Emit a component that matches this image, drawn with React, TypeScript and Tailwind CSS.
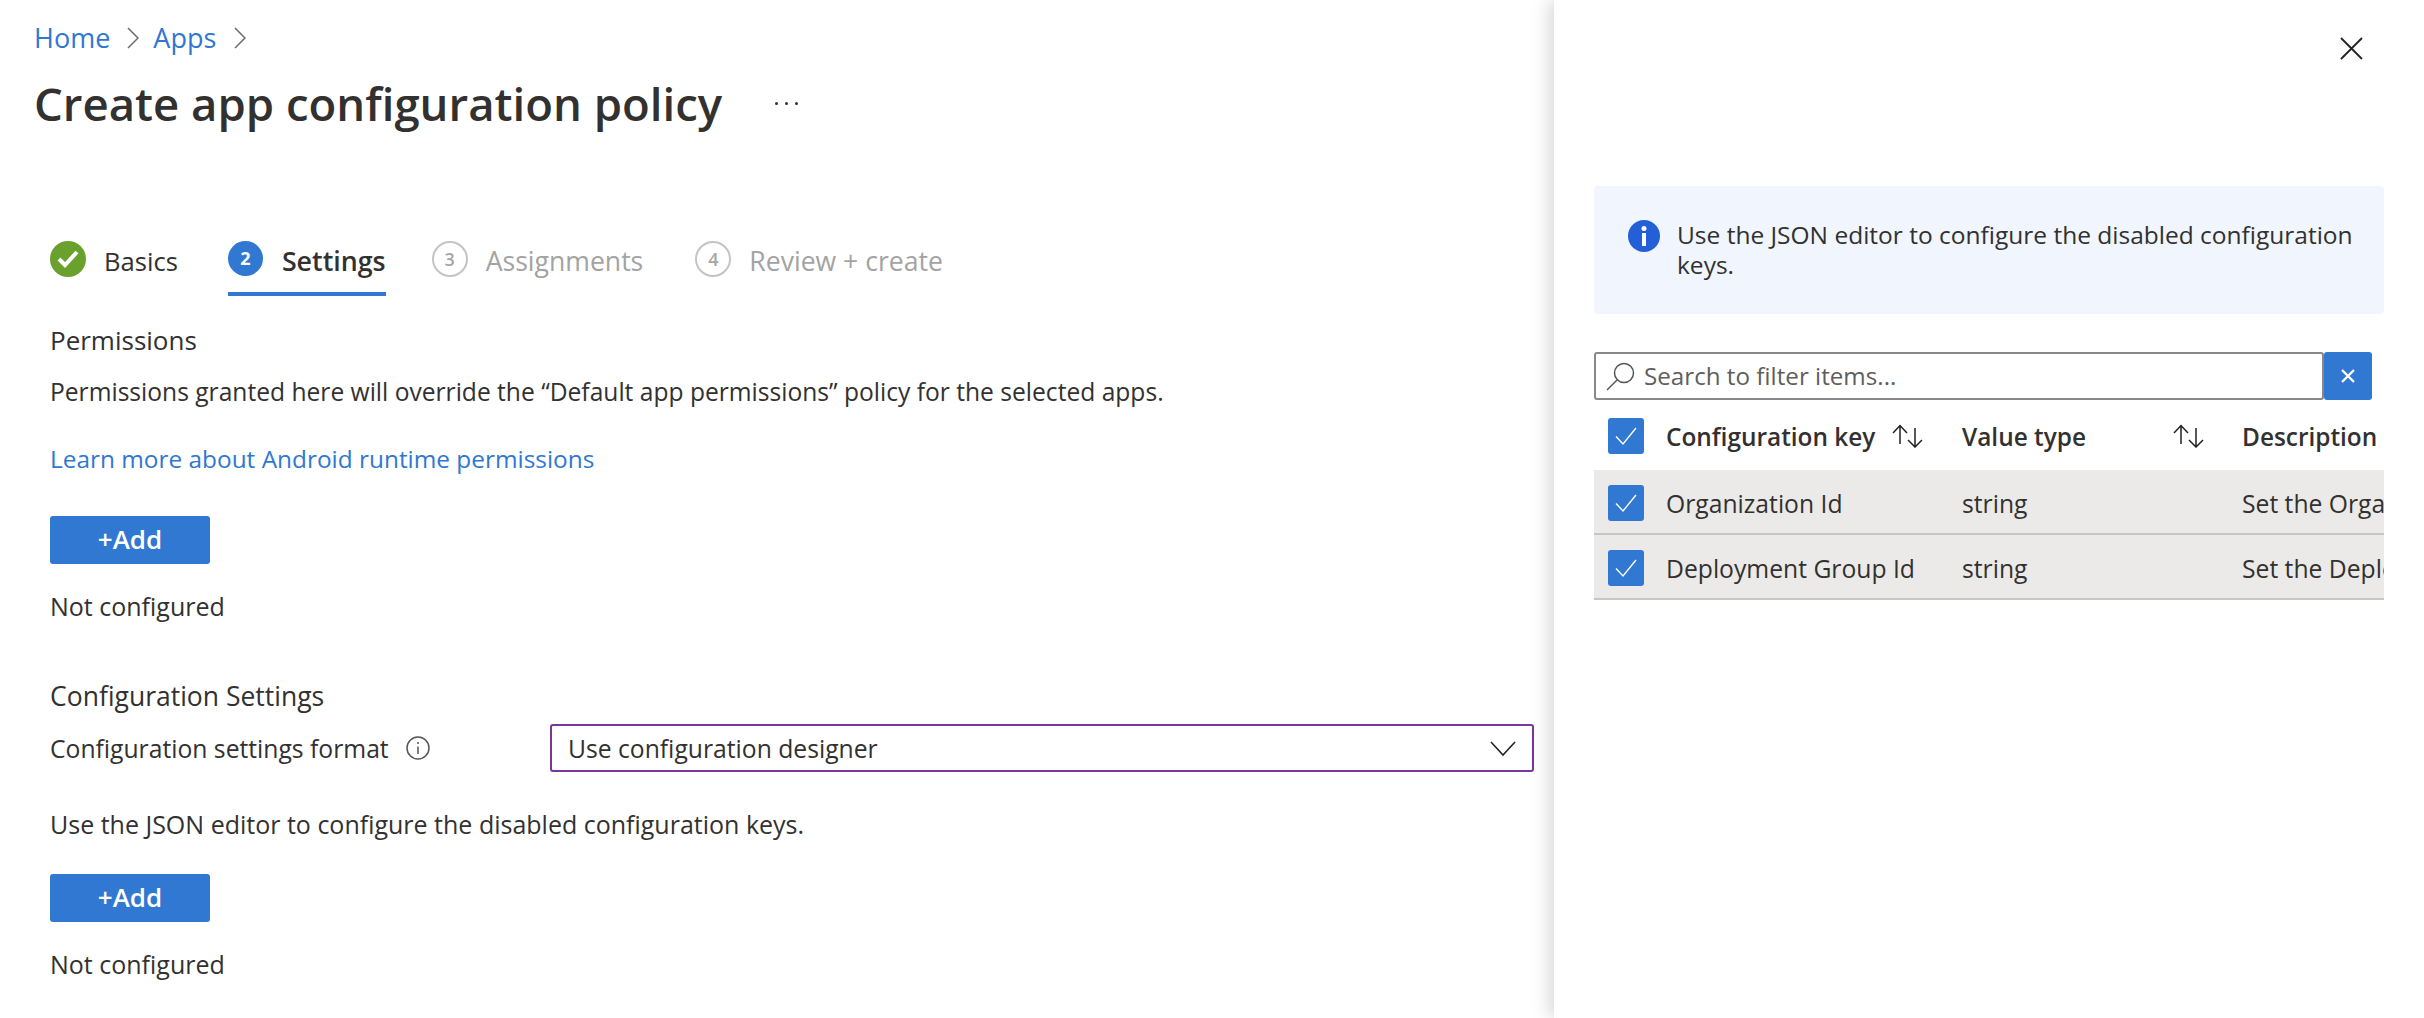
import React from 'react';

const FONT = "font-['Open_Sans','Noto_Sans',sans-serif]";

const CheckBox = () => (
  <div className="flex h-[36px] w-[36px] items-center justify-center rounded-[3px] bg-[#3078d1]">
    <svg width="24" height="22" viewBox="0 0 24 22" fill="none" stroke="#fff" strokeWidth="1.4">
      <path d="M2 11.5 L9 19 L22 3" />
    </svg>
  </div>
);

const SortIcon = () => (
  <svg width="32" height="24" viewBox="0 0 32 24" fill="none" stroke="#222" strokeWidth="1.5">
    <path d="M9 20 V2 M2 9 L9 1.5 L16 9" />
    <path d="M24 4 V23 M17 16 L24 23 L31 16" />
  </svg>
);

const AddButton = () => (
  <button className="flex h-[48px] w-[160px] items-center justify-center rounded-[3px] bg-[#3078d1] pb-[2px] text-[26px] font-semibold text-white">
    +Add
  </button>
);

const Step = ({ n, label, className }: { n: string; label: string; className: string }) => (
  <div className={`flex h-[55px] items-start gap-[18px] ${className}`}>
    <div className="flex h-[36px] w-[36px] items-center justify-center rounded-full border-2 border-[#c4c4c4] text-[18px] font-semibold text-[#a6a6a6]">
      {n}
    </div>
    <span className="text-[26.6px] leading-[40px] text-[#a3a3a3]">{label}</span>
  </div>
);

const rows = [
  { key: 'Organization Id', type: 'string', desc: 'Set the Organization Id' },
  { key: 'Deployment Group Id', type: 'string', desc: 'Set the Deployment Group Id' },
];

export default function App() {
  return (
    <div className={`flex h-[1018px] w-[2424px] overflow-hidden bg-white text-[25px] text-[#323130] ${FONT}`}>
      {/* LEFT: wizard */}
      <div className="flex w-[1554px] shrink-0 flex-col">
        <div className="ml-[34px] mt-[18px] flex h-[40px] items-center text-[27px] text-[#2f78d1]">
          <span>Home</span>
          <svg className="ml-[17px] mr-[14px]" width="12" height="22" viewBox="0 0 12 22" fill="none" stroke="#6b6b6b" strokeWidth="1.5">
            <path d="M1 1 L11 11 L1 21" />
          </svg>
          <span>Apps</span>
          <svg className="ml-[18px]" width="12" height="22" viewBox="0 0 12 22" fill="none" stroke="#6b6b6b" strokeWidth="1.5">
            <path d="M1 1 L11 11 L1 21" />
          </svg>
        </div>
        <div className="ml-[34px] mt-[15px] flex h-[60px] items-center">
          <h1 className="text-[45.5px] font-semibold text-[#323130]">Create app configuration policy</h1>
          <span className="ml-[53px] flex gap-[7px]">
            <i className="h-[3px] w-[3px] rounded-full bg-[#323130]" />
            <i className="h-[3px] w-[3px] rounded-full bg-[#323130]" />
            <i className="h-[3px] w-[3px] rounded-full bg-[#323130]" />
          </span>
        </div>

        <div className="ml-[50px] mt-[108px] flex">
          <div className="flex h-[55px] items-start gap-[18px]">
            <div className="flex h-[36px] w-[36px] items-center justify-center rounded-full bg-[#6aa12d]">
              <svg width="22" height="18" viewBox="0 0 22 18" fill="none" stroke="#fff" strokeWidth="4">
                <path d="M2 9 L8 15 L20 2" />
              </svg>
            </div>
            <span className="text-[25.6px] leading-[42px] text-[#323130]">Basics</span>
          </div>
          <div className="ml-[50px] flex h-[55px] items-start gap-[19px] border-b-4 border-[#3078d1]">
            <div className="flex h-[35px] w-[35px] items-center justify-center rounded-full bg-[#3078d1] text-[18px] font-bold text-white">
              2
            </div>
            <span className="text-[26.8px] font-semibold leading-[40px] text-[#323130]">Settings</span>
          </div>
          <Step n="3" label="Assignments" className="ml-[46px]" />
          <Step n="4" label="Review + create" className="ml-[52px]" />
        </div>

        <div className="ml-[50px] mt-[24px] flex flex-col">
          <div className="flex h-[40px] items-center text-[26px] text-[#323130]">Permissions</div>
          <div className="mt-[12px] flex h-[40px] items-center text-[24.6px]">
            Permissions granted here will override the “Default app permissions” policy for the selected apps.
          </div>
          <a className="mt-[27px] flex h-[40px] items-center text-[24.4px] text-[#2f78d1]">Learn more about Android runtime permissions</a>
          <div className="mt-[37px]">
            <AddButton />
          </div>
          <div className="mt-[23px] flex h-[40px] items-center">Not configured</div>

          <div className="mt-[50px] flex h-[40px] items-center text-[26.5px]">Configuration Settings</div>
          <div className="mt-[7px] flex h-[48px] items-center text-[24.7px]">
            <span className="pt-[2px]">Configuration settings format</span>
            <svg className="ml-[17px]" width="24" height="24" viewBox="0 0 24 24" fill="none" stroke="#555" strokeWidth="1.5">
              <circle cx="12" cy="12" r="11" />
              <path d="M12 10.5 V18 M12 6 V8" />
            </svg>
            <div className="ml-auto mr-[20px] flex h-[48px] w-[984px] items-center justify-between rounded-[3px] border-2 border-[#7b35a0] pl-[16px] pr-[16px]">
              <span className="pt-[2px]">Use configuration designer</span>
              <svg width="26" height="15" viewBox="0 0 26 15" fill="none" stroke="#222" strokeWidth="1.6">
                <path d="M1 1 L13 14 L25 1" />
              </svg>
            </div>
          </div>
          <div className="mt-[33px] flex h-[40px] items-center">Use the JSON editor to configure the disabled configuration keys.</div>
          <div className="mt-[29px]">
            <AddButton />
          </div>
          <div className="mt-[23px] flex h-[40px] items-center">Not configured</div>
        </div>
      </div>

      {/* RIGHT: config keys panel */}
      <div className="relative flex min-w-0 flex-1 flex-col bg-white pl-[40px] pr-[40px] shadow-[-6px_0_16px_rgba(0,0,0,0.14)]">
        <div className="mt-[37px] flex justify-end pr-[21px]">
          <svg width="23" height="23" viewBox="0 0 23 23" fill="none" stroke="#222" strokeWidth="1.8">
            <path d="M1 1 L22 22 M22 1 L1 22" />
          </svg>
        </div>

        <div className="mt-[126px] flex h-[128px] items-start gap-[17px] rounded-[4px] bg-[#f0f5fe] pl-[34px] pr-[30px] pt-[34px]">
          <svg className="shrink-0" width="32" height="32" viewBox="0 0 32 32">
            <circle cx="16" cy="16" r="16" fill="#2360d8" />
            <rect x="14" y="13" width="4" height="13" fill="#fff" />
            <circle cx="16" cy="8.5" r="2.5" fill="#fff" />
          </svg>
          <p className="text-[24.5px] leading-[30px]">Use the JSON editor to configure the disabled configuration keys.</p>
        </div>

        <div className="mt-[38px] flex h-[48px]">
          <div className="flex w-[730px] items-center gap-[8px] rounded-[3px] border-2 border-[#8a8886] pl-[10px]">
            <svg width="30" height="30" viewBox="0 0 30 30" fill="none" stroke="#555" strokeWidth="1.5">
              <circle cx="18" cy="12" r="9.5" />
              <path d="M11 19 L1 29" />
            </svg>
            <span className="text-[24.2px] text-[#605e5c]">Search to filter items...</span>
          </div>
          <div className="flex w-[48px] items-center justify-center rounded-[3px] bg-[#3078d1]">
            <svg width="14" height="14" viewBox="0 0 14 14" fill="none" stroke="#fff" strokeWidth="2.4">
              <path d="M1 1 L13 13 M13 1 L1 13" />
            </svg>
          </div>
        </div>

        <div className="mt-[18px] grid h-[52px] grid-cols-[72px_296px_280px_1fr] items-start overflow-hidden whitespace-nowrap text-[24.4px] font-semibold">
          <div className="pl-[14px]">
            <CheckBox />
          </div>
          <div className="flex h-[36px] items-center justify-between pr-[39px]">
            <span className="pt-[2px]">Configuration key</span>
            <SortIcon />
          </div>
          <div className="flex h-[36px] items-center justify-between pr-[38px]">
            <span className="pt-[2px]">Value type</span>
            <SortIcon />
          </div>
          <div className="flex h-[36px] items-center pt-[2px]">Description</div>
        </div>

        {rows.map((r) => (
          <div
            key={r.key}
            className="grid h-[65px] grid-cols-[72px_296px_280px_1fr] items-center overflow-hidden whitespace-nowrap border-b-2 border-[#c8c6c4] bg-[#ebeae8] pt-[2px] text-[24.7px]"
          >
            <div className="pl-[14px]">
              <CheckBox />
            </div>
            <div className="pt-[2px]">{r.key}</div>
            <div className="pt-[2px]">{r.type}</div>
            <div className="pt-[2px]">{r.desc}</div>
          </div>
        ))}
      </div>
    </div>
  );
}
